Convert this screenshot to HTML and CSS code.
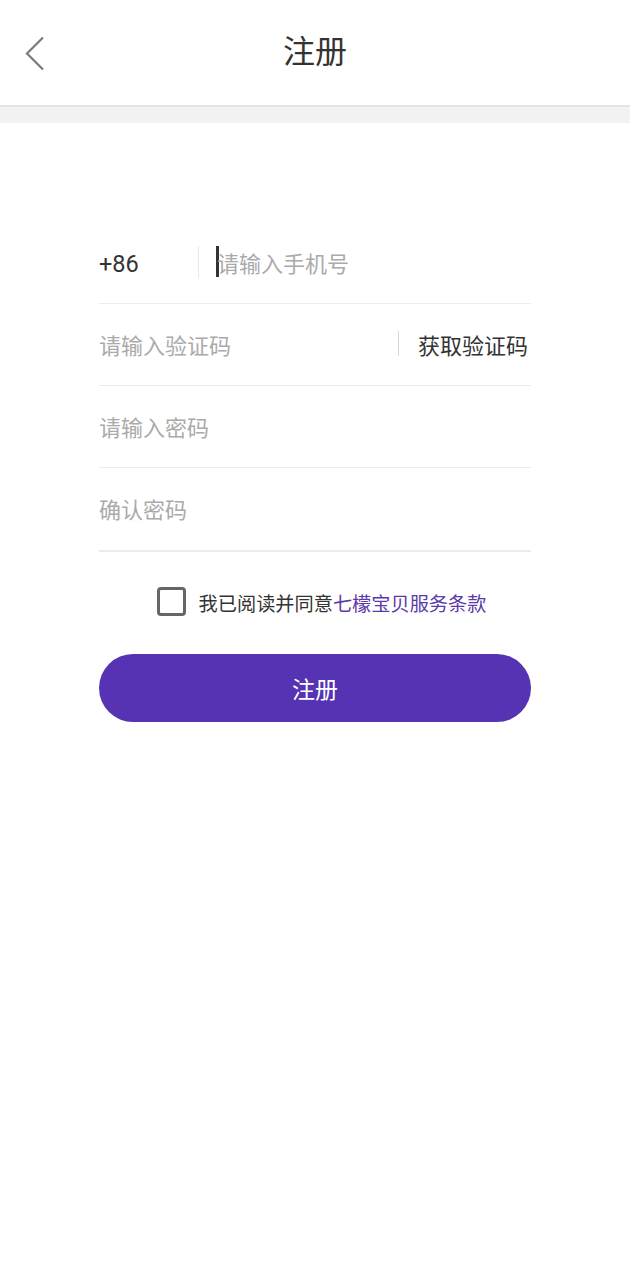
FILE: index.html
```html
<!DOCTYPE html>
<html lang="zh-CN">
<head>
<meta charset="utf-8">
<title>注册</title>
<link rel="stylesheet" href="styles.css">
</head>
<body>
<header class="topbar">
  <a class="back" href="#" aria-label="返回">
    <svg width="22" height="36" viewBox="0 0 22 36"><path d="M19 1.5 L3 17.5 L19 33.5" fill="none" stroke="#7a7a7a" stroke-width="2.2"/></svg>
  </a>
  <h1 class="title">注册</h1>
</header>
<div class="band"></div>
<main class="form">
  <div class="row">
    <span class="code">+86</span>
    <span class="vsep vsep-code"></span>
    <span class="cursor"></span>
    <span class="ph">请输入手机号</span>
  </div>
  <div class="row">
    <span class="ph grow">请输入验证码</span>
    <span class="vsep vsep-sms"></span>
    <span class="sms">获取验证码</span>
  </div>
  <div class="row">
    <span class="ph">请输入密码</span>
  </div>
  <div class="row row-last">
    <span class="ph">确认密码</span>
  </div>
  <div class="agree">
    <span class="box"></span>
    <span class="agree-text">我已阅读并同意<a class="link" href="#">七檬宝贝服务条款</a></span>
  </div>
  <button class="submit" type="button">注册</button>
</main>
</body>
</html>
```
FILE: styles.css
```css
* { box-sizing: border-box; }
html, body { margin: 0; padding: 0; background: #fff; }
body {
  font-family: "Noto Sans", "Noto Sans CJK SC", sans-serif;
  color: #333;
}
.topbar {
  height: 107px;
  border-bottom: 2px solid #e3e3e3;
  display: flex;
  align-items: center;
  justify-content: center;
  position: relative;
}
.back {
  position: absolute;
  left: 24px;
  top: 36px;
  display: block;
  width: 22px;
  height: 36px;
}
.back svg { display: block; }
.title {
  margin: 0;
  font-size: 32px;
  font-weight: 400;
  color: #333;
  line-height: 1;
  margin-top: -3px;
}
.band { height: 16px; background: #f2f2f2; }
.form {
  margin: 99px 99px 0;
  display: flex;
  flex-direction: column;
}
.row {
  height: 82px;
  border-bottom: 1px solid #ececec;
  display: flex;
  align-items: center;
  font-size: 22px;
  padding-bottom: 2px;
}
.row-last { border-bottom: 2px solid #ebebeb; height: 84px; }
.code {
  font-family: "Roboto", "Noto Sans", sans-serif;
  font-size: 23.5px;
  color: #333;
  width: 99px;
  padding-top: 4px;
}
.vsep {
  width: 1px;
  background: #e8e8e8;
}
.vsep-code { height: 32px; margin-right: 17px; }
.vsep-sms { height: 25px; background: #d8d8d8; margin-right: 19px; }
.cursor {
  width: 3px;
  height: 31px;
  background: #333;
  margin-right: -2px;
}
.ph { color: #aaa; }
.grow { flex: 1; }
.sms { color: #333; padding-right: 3px; }
.agree {
  margin-top: 34px;
  display: flex;
  align-items: center;
  justify-content: center;
  gap: 13px;
  padding-left: 13px;
}
.box {
  width: 29px;
  height: 29px;
  border: 3px solid #666;
  border-radius: 4px;
}
.agree-text { font-size: 19.2px; color: #333; padding-top: 3px; }
.link { color: #5b3aa8; text-decoration: none; }
.submit {
  margin-top: 37px;
  height: 68px;
  border: none;
  border-radius: 34px;
  background: #5533b3;
  color: #fff;
  font-family: "Noto Sans CJK SC", sans-serif;
  font-size: 23px;
  padding: 0;
}
```
